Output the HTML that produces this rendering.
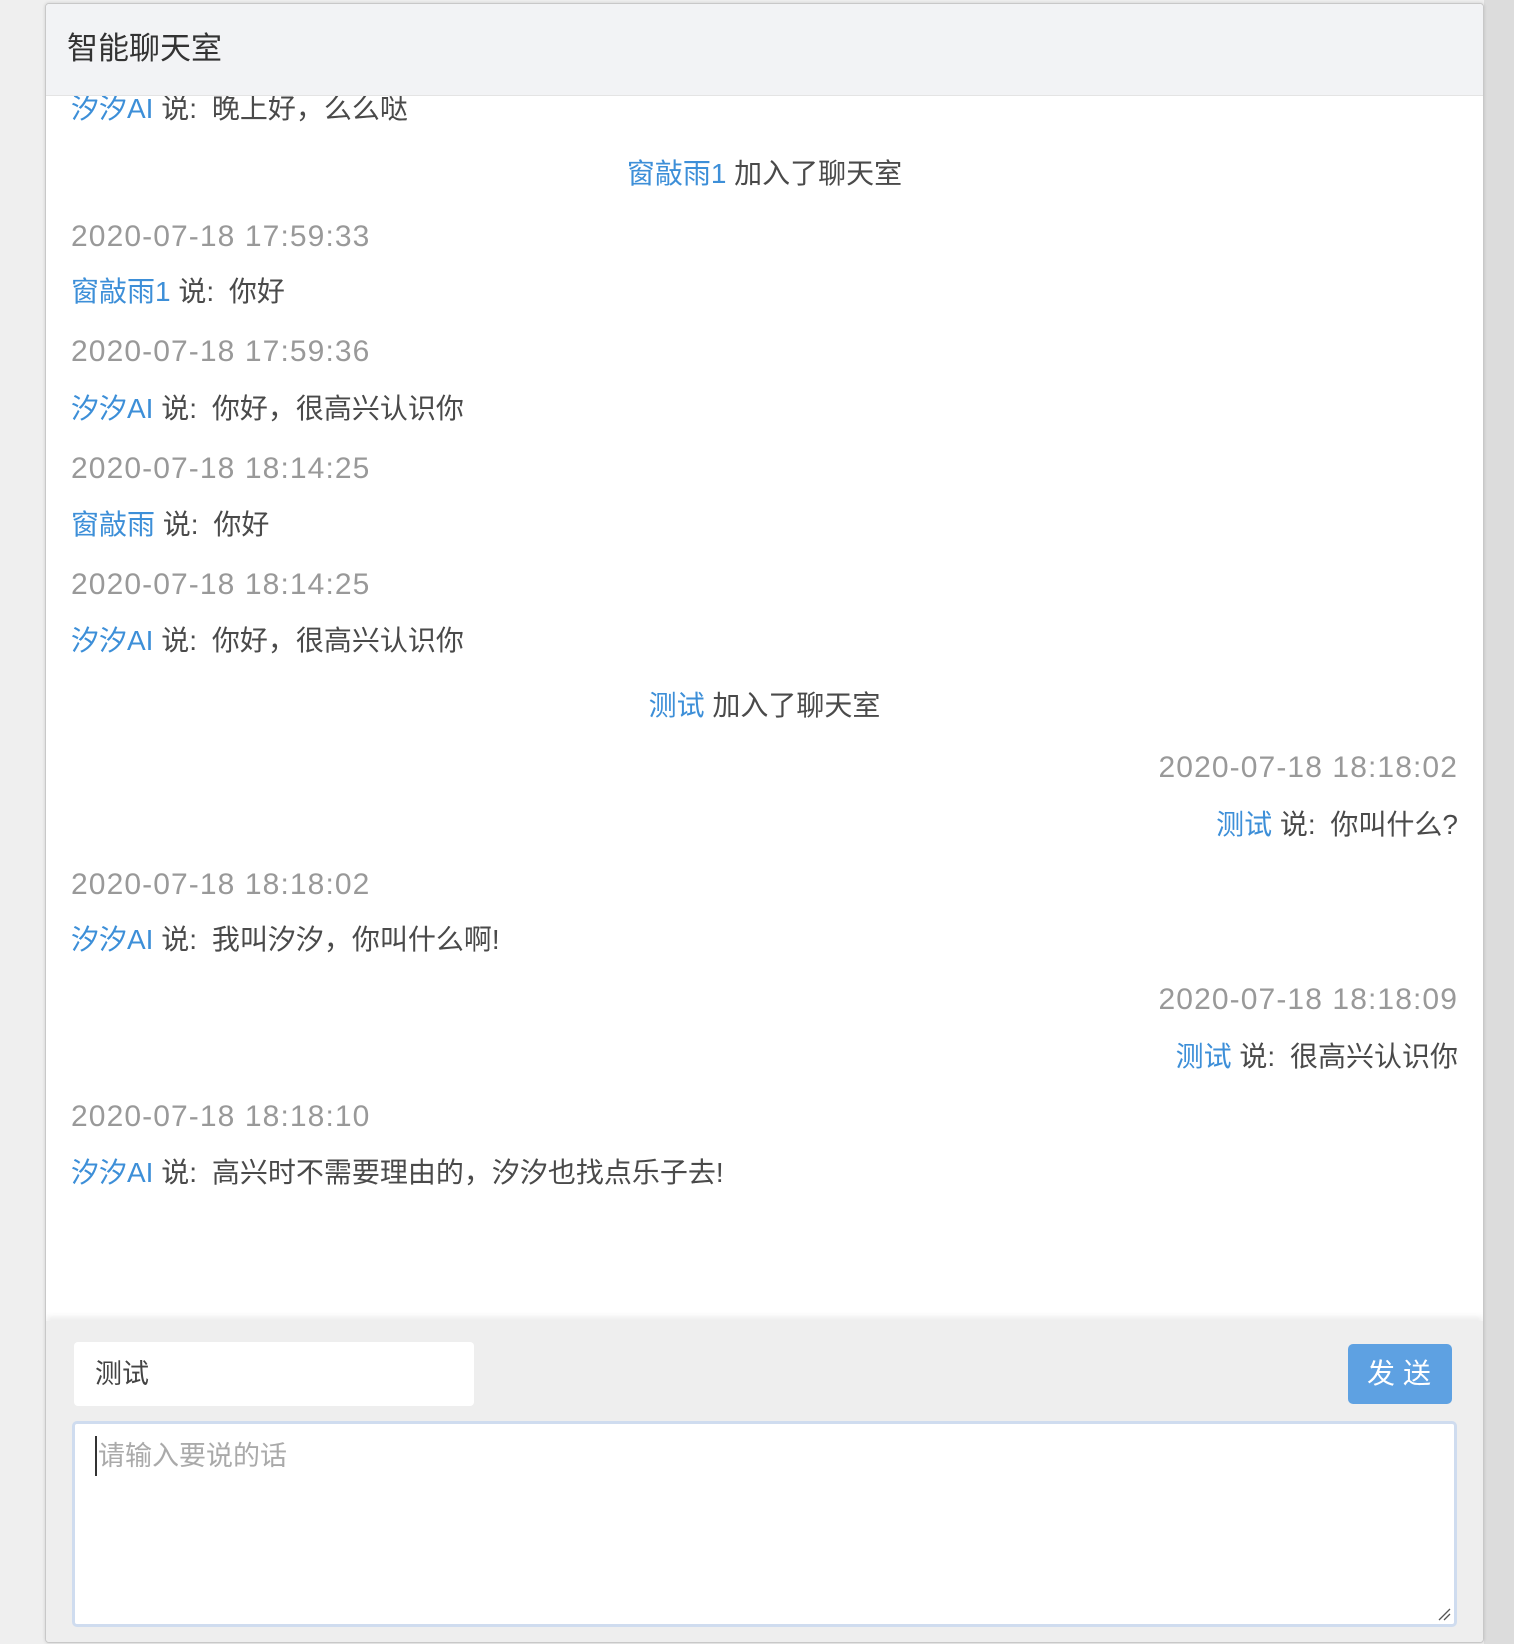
<!DOCTYPE html>
<html><head><meta charset="utf-8"><style>
*{margin:0;padding:0;box-sizing:border-box}
body{width:1514px;height:1644px;background:#efefef;font-family:"Liberation Sans","Noto Sans CJK SC",sans-serif;position:relative;overflow:hidden}
.rbg{position:absolute;left:1484px;top:0;width:30px;height:1644px;background:#dcdcdc}
.panel{position:absolute;left:45px;top:3px;width:1439px;height:1640px;background:#fff;border:1px solid #c8c8c8;border-radius:4px;box-shadow:0 0 3px rgba(0,0,0,.15);overflow:hidden}
.hd{position:absolute;left:0;top:0;width:100%;height:92px;background:#f2f3f5;border-bottom:1px solid #e4e4e4;font-size:31px;color:#333;padding-left:21px;line-height:90px;z-index:2}
.l{position:absolute;left:25px;right:25px;font-size:28px;line-height:36px;color:#4a4a4a;white-space:nowrap}
.ts{color:#999;font-size:30px;letter-spacing:1.1px}
.c{text-align:center}.r{text-align:right}
.n{color:#3d8fd8}
.s{margin:0 5px 0 2px}
.ft{position:absolute;left:0;top:1317px;width:100%;height:330px;background:#eeeeee;box-shadow:0 -4px 6px rgba(0,0,0,.08)}
.name{position:absolute;left:28px;top:21px;width:400px;height:64px;background:#fff;border-radius:4px;font-size:27px;color:#444;line-height:64px;padding-left:21px}
.btn{position:absolute;left:1302px;top:23px;width:104px;height:60px;background:#5ea1e2;border-radius:5px;color:#fff;font-size:28px;line-height:60px;text-align:center;letter-spacing:8px;padding-left:6px}
.ta{position:absolute;left:26px;top:100px;width:1385px;height:206px;background:#fff;border:3px solid #cfdcef;border-radius:5px}
.ph{position:absolute;left:20px;top:12px;font-size:27px;color:#aaa;line-height:40px;border-left:2px solid #333;padding-left:1px}
</style></head><body>
<div class="rbg"></div>
<div class="panel">
<div class="hd">智能聊天室</div>
<div class="l" style="top:87px"><span class="n">汐汐AI</span> 说:<span class="s"> </span>晚上好，么么哒</div>
<div class="l c" style="top:152px"><span class="n">窗敲雨1</span> 加入了聊天室</div>
<div class="l ts" style="top:215px">2020-07-18 17:59:33</div>
<div class="l" style="top:270px"><span class="n">窗敲雨1</span> 说:<span class="s"> </span>你好</div>
<div class="l ts" style="top:330px">2020-07-18 17:59:36</div>
<div class="l" style="top:387px"><span class="n">汐汐AI</span> 说:<span class="s"> </span>你好，很高兴认识你</div>
<div class="l ts" style="top:447px">2020-07-18 18:14:25</div>
<div class="l" style="top:503px"><span class="n">窗敲雨</span> 说:<span class="s"> </span>你好</div>
<div class="l ts" style="top:563px">2020-07-18 18:14:25</div>
<div class="l" style="top:619px"><span class="n">汐汐AI</span> 说:<span class="s"> </span>你好，很高兴认识你</div>
<div class="l c" style="top:684px"><span class="n">测试</span> 加入了聊天室</div>
<div class="l ts r" style="top:746px">2020-07-18 18:18:02</div>
<div class="l r" style="top:803px"><span class="n">测试</span> 说:<span class="s"> </span>你叫什么?</div>
<div class="l ts" style="top:863px">2020-07-18 18:18:02</div>
<div class="l" style="top:918px"><span class="n">汐汐AI</span> 说:<span class="s"> </span>我叫汐汐，你叫什么啊!</div>
<div class="l ts r" style="top:978px">2020-07-18 18:18:09</div>
<div class="l r" style="top:1035px"><span class="n">测试</span> 说:<span class="s"> </span>很高兴认识你</div>
<div class="l ts" style="top:1095px">2020-07-18 18:18:10</div>
<div class="l" style="top:1151px"><span class="n">汐汐AI</span> 说:<span class="s"> </span>高兴时不需要理由的，汐汐也找点乐子去!</div>
<div class="ft">
<div class="name">测试</div>
<div class="btn">发送</div>
<div class="ta"><div class="ph">请输入要说的话</div>
<svg style="position:absolute;right:3px;bottom:3px" width="14" height="14"><path d="M2 13L13 2M7 13L13 7" stroke="#555" stroke-width="1.3"/></svg></div>
</div>
</div>
</body></html>
